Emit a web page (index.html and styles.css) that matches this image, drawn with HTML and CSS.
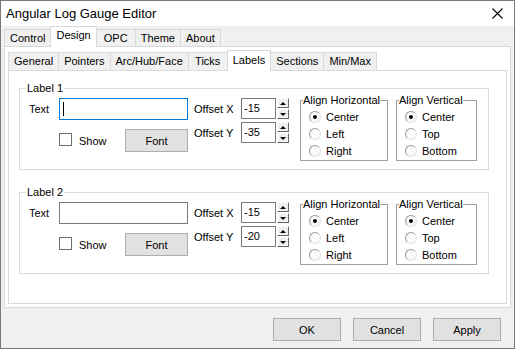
FILE: index.html
```html
<!DOCTYPE html>
<html lang="en">
<head>
    <meta charset="UTF-8">
    <title>Angular Log Gauge Editor</title>
    <link rel="stylesheet" href="styles.css">
</head>
<body>

<div class="window">
    <!-- Title bar -->
    <div class="titlebar">
        <span class="title">Angular Log Gauge Editor</span>
        <svg class="close" width="11" height="11" viewBox="0 0 11 11">
            <path d="M0.5 0.5 L10.5 10.5 M10.5 0.5 L0.5 10.5" stroke="#000" stroke-width="1.1" fill="none"/>
        </svg>
    </div>

    <!-- Outer tabs -->
    <div class="tabs outer-tabs">
        <div class="tab">Control</div>
        <div class="tab active">Design</div>
        <div class="tab">OPC</div>
        <div class="tab">Theme</div>
        <div class="tab">About</div>
    </div>

    <div class="page outer-page">
        <!-- Inner tabs -->
        <div class="tabs inner-tabs">
            <div class="tab">General</div>
            <div class="tab">Pointers</div>
            <div class="tab">Arc/Hub/Face</div>
            <div class="tab">Ticks</div>
            <div class="tab active">Labels</div>
            <div class="tab">Sections</div>
            <div class="tab">Min/Max</div>
        </div>

        <div class="page inner-page">

            <fieldset class="group">
                <legend>Label 1</legend>
                <div class="label-form">
                    <div class="fields">
                        <div class="field-row">
                            <span class="lbl">Text</span>
                            <div class="textbox focused"><span class="caret"></span></div>
                        </div>
                        <div class="field-row show-row">
                            <span class="check"></span>
                            <span class="check-text">Show</span>
                            <button class="btn font-btn">Font</button>
                        </div>
                    </div>
                    <div class="offsets">
                        <div class="offset-row">
                            <span class="lbl">Offset X</span>
                            <div class="spin-input">-15</div>
                            <div class="spin-btns"><span class="spin-btn up"></span><span class="spin-btn down"></span></div>
                        </div>
                        <div class="offset-row">
                            <span class="lbl">Offset Y</span>
                            <div class="spin-input">-35</div>
                            <div class="spin-btns"><span class="spin-btn up"></span><span class="spin-btn down"></span></div>
                        </div>
                    </div>
                    <fieldset class="align align-h">
                        <legend>Align Horizontal</legend>
                        <div class="radio checked"><span class="radio-dot"></span>Center</div>
                        <div class="radio"><span class="radio-dot"></span>Left</div>
                        <div class="radio"><span class="radio-dot"></span>Right</div>
                    </fieldset>
                    <fieldset class="align align-v">
                        <legend>Align Vertical</legend>
                        <div class="radio checked"><span class="radio-dot"></span>Center</div>
                        <div class="radio"><span class="radio-dot"></span>Top</div>
                        <div class="radio"><span class="radio-dot"></span>Bottom</div>
                    </fieldset>
                </div>
            </fieldset>

            <fieldset class="group">
                <legend>Label 2</legend>
                <div class="label-form">
                    <div class="fields">
                        <div class="field-row">
                            <span class="lbl">Text</span>
                            <div class="textbox"></div>
                        </div>
                        <div class="field-row show-row">
                            <span class="check"></span>
                            <span class="check-text">Show</span>
                            <button class="btn font-btn">Font</button>
                        </div>
                    </div>
                    <div class="offsets">
                        <div class="offset-row">
                            <span class="lbl">Offset X</span>
                            <div class="spin-input">-15</div>
                            <div class="spin-btns"><span class="spin-btn up"></span><span class="spin-btn down"></span></div>
                        </div>
                        <div class="offset-row">
                            <span class="lbl">Offset Y</span>
                            <div class="spin-input">-20</div>
                            <div class="spin-btns"><span class="spin-btn up"></span><span class="spin-btn down"></span></div>
                        </div>
                    </div>
                    <fieldset class="align align-h">
                        <legend>Align Horizontal</legend>
                        <div class="radio checked"><span class="radio-dot"></span>Center</div>
                        <div class="radio"><span class="radio-dot"></span>Left</div>
                        <div class="radio"><span class="radio-dot"></span>Right</div>
                    </fieldset>
                    <fieldset class="align align-v">
                        <legend>Align Vertical</legend>
                        <div class="radio checked"><span class="radio-dot"></span>Center</div>
                        <div class="radio"><span class="radio-dot"></span>Top</div>
                        <div class="radio"><span class="radio-dot"></span>Bottom</div>
                    </fieldset>
                </div>
            </fieldset>

        </div>
    </div>

    <!-- Dialog buttons -->
    <div class="footer">
        <button class="btn dlg-btn">OK</button>
        <button class="btn dlg-btn">Cancel</button>
        <button class="btn dlg-btn">Apply</button>
    </div>
</div>

</body>
</html>
```

FILE: styles.css
```css
body {
    margin: 0;
    padding: 0;
}

/* Dialog window */
.window {
    width: 515px;
    height: 349px;
    box-sizing: border-box;
    border: 1px solid #7a7a7a;
    background-color: #f0f0f0;
    display: flex;
    flex-direction: column;
    font-family: "Liberation Sans", Arial, sans-serif;
    font-size: 11px;
    color: #000;
}

.titlebar {
    height: 25px;
    flex-shrink: 0;
    background-color: #fff;
    display: flex;
    align-items: center;
    padding-left: 5px;
}

.title {
    font-size: 13px;
}

.close {
    margin-left: auto;
    margin-right: 11px;
}

/* Tabs */
.tabs {
    display: flex;
    align-items: flex-end;
    height: 20px;
    flex-shrink: 0;
}

.outer-tabs {
    margin-left: 3px;
}

.tab {
    height: 16px;
    line-height: 16px;
    padding: 0 5px;
    min-width: 28px;
    text-align: center;
    border: 1px solid #d9d9d9;
    border-bottom: none;
    background-color: #f0f0f0;
    margin-right: -1px;
    white-space: nowrap;
}

.tab.active {
    height: 20px;
    line-height: 17px;
    background-color: #fff;
    margin-bottom: -1px;
    position: relative;
    z-index: 1;
}

.inner-tabs .tab {
    height: 17px;
    line-height: 17px;
}

.inner-tabs .tab.active {
    height: 20px;
    line-height: 18px;
}

/* Tab pages */
.page {
    background-color: #fff;
    border: 1px solid #d9d9d9;
    box-sizing: border-box;
}

.outer-page {
    height: 262px;
    flex-shrink: 0;
    margin: 0 3px;
    padding: 3px;
    display: flex;
    flex-direction: column;
}

.inner-page {
    flex: 1;
    padding: 10px 0 0 10px;
}

/* Label group boxes */
.group {
    width: 470px;
    box-sizing: border-box;
    margin: 0;
    padding: 0 0 8px 9px;
    border: 1px solid #dcdcdc;
    min-width: 0;
}

.group + .group {
    margin-top: 15px;
}

.group > legend {
    padding: 0 1px;
    margin-left: -3px;
    line-height: 14px;
}

.label-form {
    display: flex;
    align-items: flex-start;
}

.fields {
    width: 159px;
    margin-top: 3px;
}

.field-row {
    display: flex;
    align-items: center;
}

.field-row .lbl {
    width: 30px;
}

.textbox {
    width: 129px;
    height: 22px;
    box-sizing: border-box;
    border: 1px solid #7a7a7a;
    background-color: #fff;
    display: flex;
    align-items: center;
    padding-left: 3px;
}

.textbox.focused {
    border-color: #0078d7;
}

.caret {
    width: 1px;
    height: 14px;
    background-color: #000;
}

.show-row {
    margin-top: 9px;
    height: 23px;
    padding-left: 30px;
}

.check {
    width: 13px;
    height: 13px;
    box-sizing: border-box;
    border: 1px solid #6d6d6d;
    background-color: #fff;
    margin-top: -2px;
}

.check-text {
    margin-left: 7px;
}

.btn {
    font: inherit;
    color: #000;
    background-color: #e1e1e1;
    border: 1px solid #adadad;
    height: 23px;
    padding: 0;
}

.font-btn {
    margin-left: auto;
    width: 63px;
}

/* Offset spinners */
.offsets {
    margin-left: 6px;
    margin-top: 3px;
}

.offset-row {
    display: flex;
    align-items: center;
}

.offset-row + .offset-row {
    margin-top: 3px;
}

.offset-row .lbl {
    width: 47px;
}

.spin-input {
    width: 35px;
    height: 21px;
    box-sizing: border-box;
    border: 1px solid #7a7a7a;
    background-color: #fff;
    padding-left: 2px;
    line-height: 19px;
}

.spin-btns {
    display: flex;
    flex-direction: column;
    gap: 1px;
    margin-left: 1px;
}

.spin-btn {
    width: 12px;
    height: 10px;
    box-sizing: border-box;
    border: 1px solid;
    border-color: #fff #6a6a6a #6a6a6a #fff;
    background-color: #f0f0f0;
    display: flex;
    align-items: center;
    justify-content: center;
}

.spin-btn::after {
    content: "";
    border-left: 3px solid transparent;
    border-right: 3px solid transparent;
}

.spin-btn.up::after {
    border-bottom: 3px solid #000;
}

.spin-btn.down::after {
    border-top: 3px solid #000;
}

/* Classic radio groups */
.align {
    margin: 0 0 0 11px;
    padding: 2px 0 1px 8px;
    border: 1px solid #a0a0a0;
    box-sizing: border-box;
    min-width: 0;
}

.align > legend {
    padding: 0;
    margin-left: -6px;
    line-height: 11px;
}

.align-h {
    width: 88px;
}

.align-v {
    width: 81px;
    margin-left: 8px;
}

.radio {
    display: flex;
    align-items: center;
    height: 17px;
}

.radio-dot {
    width: 12px;
    height: 12px;
    box-sizing: border-box;
    border-radius: 50%;
    border: 1px solid;
    border-color: #9a9a9a #e3e3e3 #e3e3e3 #9a9a9a;
    background-color: #fafafa;
    margin-right: 5px;
    display: flex;
    align-items: center;
    justify-content: center;
}

.radio.checked .radio-dot::after {
    content: "";
    width: 4px;
    height: 4px;
    border-radius: 50%;
    background-color: #000;
}

/* Bottom buttons */
.footer {
    display: flex;
    justify-content: flex-end;
    gap: 12px;
    padding: 10px 13px 0 0;
}

.dlg-btn {
    width: 68px;
}
```
